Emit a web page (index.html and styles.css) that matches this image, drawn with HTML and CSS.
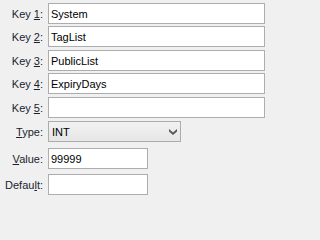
FILE: index.html
```html
<!DOCTYPE html>
<html>
<head>
<meta charset="utf-8">
<link rel="stylesheet" href="styles.css">
</head>
<body>
<div class="form">
  <div class="row first">
    <label class="lbl">Key <u>1</u>:</label>
    <input class="field wide" type="text" value="System">
  </div>
  <div class="row g2">
    <label class="lbl">Key <u>2</u>:</label>
    <input class="field wide" type="text" value="TagList">
  </div>
  <div class="row g3">
    <label class="lbl">Key <u>3</u>:</label>
    <input class="field wide" type="text" value="PublicList">
  </div>
  <div class="row g2">
    <label class="lbl">Key <u>4</u>:</label>
    <input class="field wide" type="text" value="ExpiryDays">
  </div>
  <div class="row g3">
    <label class="lbl">Key <u>5</u>:</label>
    <input class="field wide" type="text" value="">
  </div>
  <div class="row g3">
    <label class="lbl"><u>T</u>ype:</label>
    <div class="select">
      <span class="select-text">INT</span>
      <svg class="chev" width="8" height="6" viewBox="0 0 8 6">
        <path d="M0 0 L4 3.4 L8 0 L8 2.4 L4 6 L0 2.4 Z" fill="#555"/>
      </svg>
    </div>
  </div>
  <div class="row g6">
    <label class="lbl"><u>V</u>alue:</label>
    <input class="field short" type="text" value="99999">
  </div>
  <div class="row g5">
    <label class="lbl">Defau<u>l</u>t:</label>
    <input class="field short" type="text" value="">
  </div>
</div>
</body>
</html>
```
FILE: styles.css
```css
html, body {
  margin: 0;
  padding: 0;
  background: #f0f0f0;
}
body {
  width: 267px;
  height: 200px;
  overflow: hidden;
  font-family: "Liberation Sans", Arial, sans-serif;
  font-size: 11px;
}
.form {
  display: flex;
  flex-direction: column;
  padding-top: 3px;
}
.row {
  display: flex;
  align-items: center;
  height: 21px;
}
.g2 { margin-top: 2px; }
.g3 { margin-top: 3px; }
.g5 { margin-top: 5px; }
.g6 { margin-top: 6px; }
.lbl {
  width: 43px;
  margin-right: 5px;
  text-align: right;
  color: #1a1e2e;
  white-space: nowrap;
}
.lbl u {
  text-underline-offset: 1px;
}
.field {
  box-sizing: border-box;
  height: 21px;
  margin: 0;
  border: 1px solid #adadad;
  background: #fff;
  padding: 0 2px;
  font-family: "Liberation Sans", Arial, sans-serif;
  font-size: 11px;
  color: #000;
  outline: none;
}
.wide { width: 217px; }
.short { width: 100px; }
.select {
  box-sizing: border-box;
  width: 133px;
  height: 21px;
  border: 1px solid #acacac;
  background: linear-gradient(#f2f2f2, #e6e6e6);
  display: flex;
  align-items: center;
  justify-content: space-between;
  padding: 0 3px 0 3px;
  color: #000;
}
.chev {
  display: block;
  margin-top: 1px;
}
```
